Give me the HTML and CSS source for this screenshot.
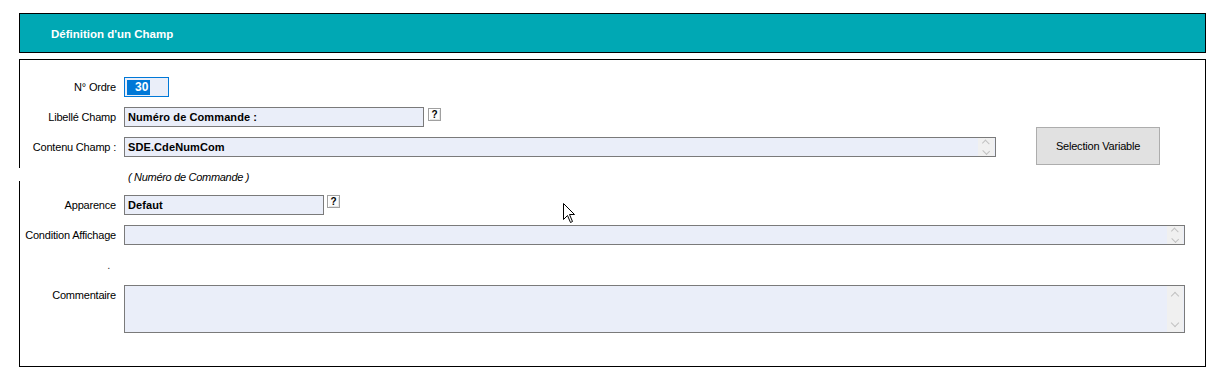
FILE: index.html
```html
<!DOCTYPE html>
<html lang="fr">
<head>
  <meta charset="UTF-8">
  <title>Définition d'un Champ</title>
  <link rel="stylesheet" href="styles.css">
</head>
<body>

<div class="page">
  <div class="header">Définition d'un Champ</div>

  <div class="panel">
    <div class="row">
      <label class="lbl">N° Ordre</label>
      <div class="field field-order"><span class="sel">30</span></div>
    </div>

    <div class="row">
      <label class="lbl">Libellé Champ</label>
      <div class="field field-libelle">Numéro de Commande :</div>
      <span class="help">?</span>
    </div>

    <div class="row">
      <label class="lbl">Contenu Champ :</label>
      <div class="field field-contenu">
        SDE.CdeNumCom
        <span class="spin"><i class="up"></i><i class="down"></i></span>
      </div>
      <button class="btn-select">Selection Variable</button>
    </div>

    <div class="note">( Numéro de Commande )</div>

    <div class="row row-apparence">
      <label class="lbl">Apparence</label>
      <div class="field field-apparence">Defaut</div>
      <span class="help">?</span>
    </div>

    <div class="row">
      <label class="lbl">Condition Affichage</label>
      <div class="field field-wide">
        <span class="spin"><i class="up"></i><i class="down"></i></span>
      </div>
    </div>

    <div class="row row-dot">
      <label class="lbl lbl-dot">.</label>
    </div>

    <div class="row row-comment">
      <label class="lbl">Commentaire</label>
      <div class="field field-wide field-comment">
        <span class="scroll"><i class="up"></i><i class="down"></i></span>
      </div>
    </div>
  </div>
</div>

<svg class="cursor" width="13" height="20" viewBox="0 0 13 20">
  <path d="M0.5 0.5 L0.5 16.5 L4.5 12.5 L7.5 19.5 L9.5 18.5 L6.5 11.5 L11.5 11.5 Z" fill="#fff" stroke="#000" stroke-width="1"/>
</svg>

</body>
</html>
```

FILE: styles.css
```css
body {
  margin: 0;
  background: #fff;
  font-family: "Liberation Sans", Arial, sans-serif;
  font-size: 11px;
  letter-spacing: -0.2px;
  color: #000;
}

.page {
  padding: 13px 12px 0 19px;
}

.header {
  box-sizing: border-box;
  height: 40px;
  line-height: 38px;
  padding: 1px 0 0 31px;
  border: 1px solid #000;
  background: #00a8b4;
  color: #fff;
  font-weight: bold;
  font-size: 11.5px;
  letter-spacing: 0;
}

.panel {
  position: relative;
  margin-top: 6px;
  height: 308px;
  box-sizing: border-box;
  border: 1px solid #000;
  padding-top: 17px;
}

/* small break in the left border */
.panel::before {
  content: "";
  position: absolute;
  left: -1px;
  top: 108px;
  width: 1px;
  height: 13px;
  background: #fff;
}

.row {
  display: flex;
  align-items: center;
  height: 20px;
  margin-bottom: 10px;
}

.lbl {
  width: 96px;
  flex: none;
  margin-right: 8px;
  text-align: right;
}

.field {
  position: relative;
  height: 20px;
  box-sizing: border-box;
  border: 1px solid #7a7a7a;
  background: #eaeef9;
  padding-left: 3px;
  line-height: 18px;
  font-weight: bold;
  letter-spacing: 0.1px;
}

.field-order {
  width: 45px;
  border-color: #0078d7;
  padding-left: 2px;
  padding-top: 1px;
  line-height: 16px;
}

.sel {
  display: inline-block;
  padding: 0 1px 0 8px;
  background: #0078d7;
  color: #fff;
  line-height: 15px;
  font-size: 12px;
}

.field-libelle {
  width: 300px;
}

.field-contenu {
  width: 872px;
}

.field-apparence {
  width: 200px;
}

.field-wide {
  width: 1061px;
}

.help {
  align-self: flex-start;
  margin: 1px 0 0 4px;
  width: 13px;
  height: 13px;
  box-sizing: border-box;
  border: 1px solid #a0a0a0;
  box-shadow: inset 1px 1px 0 #fff, inset -1px -1px 0 #e3e3e3;
  background: #fbfbfb;
  font-weight: bold;
  font-size: 10px;
  line-height: 11px;
  text-align: center;
}

.row-apparence .help {
  margin-left: 3px;
  margin-top: 0;
}

.spin,
.scroll {
  position: absolute;
  right: 1px;
  top: 0;
  bottom: 0;
  width: 16px;
  background: #f0f0f0;
  display: flex;
  flex-direction: column;
  align-items: center;
  justify-content: center;
  gap: 3px;
}

.scroll {
  justify-content: space-between;
  padding: 7px 0 6px;
  box-sizing: border-box;
}

.up,
.down {
  display: block;
  width: 5px;
  height: 5px;
  border-left: 1px solid #c2c2c2;
  border-top: 1px solid #c2c2c2;
  transform: rotate(45deg);
}

.up {
  margin-top: 3px;
}

.down {
  transform: rotate(225deg);
  margin-bottom: 3px;
}

.scroll .up,
.scroll .down {
  margin: 0;
}

.btn-select {
  margin-left: 40px;
  margin-top: -2px;
  width: 124px;
  height: 38px;
  flex: none;
  padding: 0;
  border: 1px solid #adadad;
  background: #e1e1e1;
  font-family: "Liberation Sans", Arial, sans-serif;
  font-size: 11px;
  letter-spacing: -0.2px;
  color: #000;
}

.note {
  height: 14px;
  line-height: 14px;
  margin: 13px 0 11px 108px;
  font-style: italic;
  letter-spacing: -0.3px;
}

.row-dot .lbl-dot {
  padding-right: 6px;
  box-sizing: border-box;
  color: #333;
}

.row-comment {
  align-items: flex-start;
  height: 48px;
}

.row-comment .lbl {
  line-height: 20px;
}

.field-comment {
  height: 48px;
}

.cursor {
  position: absolute;
  left: 563px;
  top: 203px;
}
```
